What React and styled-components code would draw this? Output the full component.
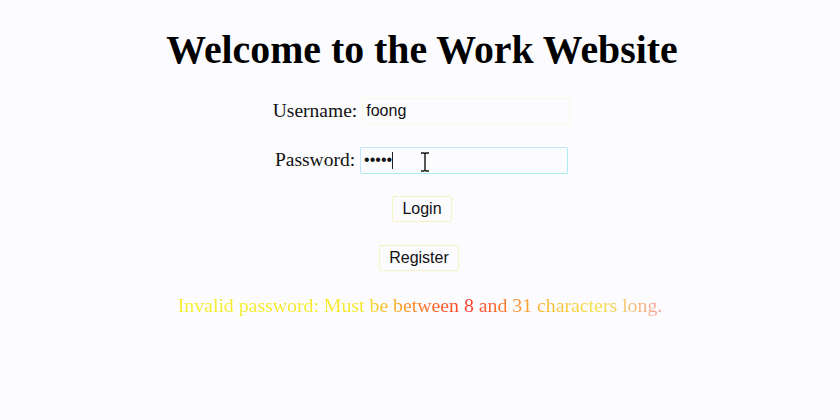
import React from "react";
import styled, { createGlobalStyle } from "styled-components";

const GlobalStyle = createGlobalStyle`
  html, body {
    margin: 0;
    padding: 0;
    background: #fcfcff;
  }
  body {
    font-family: "Liberation Serif", "Times New Roman", serif;
  }
`;

function App() {
  return (
    <>
      <GlobalStyle />
      <Page>
        <Title>Welcome to the Work Website</Title>
        <Form>
          <Row $shift={3}>
            <Label>Username:</Label>
            <Input type="text" defaultValue="foong" />
          </Row>
          <Row $shift={3}>
            <Label>Password:</Label>
            <InputWrap>
              <Input type="password" defaultValue="fooon" focused />
              <Caret />
              <Cursor viewBox="0 0 10 20" width="10" height="20">
                <path
                  d="M1 1h2.5c.8 0 1.3.4 1.5 1 .2-.6.7-1 1.5-1H9M5 2v16M1 19h2.5c.8 0 1.3-.4 1.5-1 .2.6.7 1 1.5 1H9"
                  fill="none"
                  stroke="#111"
                  strokeWidth="1.4"
                />
              </Cursor>
            </InputWrap>
          </Row>
          <Row $shift={4}>
            <Button>Login</Button>
          </Row>
          <Row $shift={-2}>
            <Button>Register</Button>
          </Row>
        </Form>
        <ErrorText>Invalid password: Must be between 8 and 31 characters long.</ErrorText>
      </Page>
    </>
  );
}

export default App;

const Page = styled.div`
  width: 840px;
  height: 420px;
  padding-top: 28px;
  box-sizing: border-box;
  display: flex;
  flex-flow: column nowrap;
  align-items: center;
`;

const Title = styled.h1`
  margin: 0 0 25px 0;
  height: 44px;
  line-height: 44px;
  font-size: 39.8px;
  font-weight: 700;
  color: #000;
  transform: translateX(2px);
`;

const Form = styled.div`
  display: flex;
  flex-flow: column nowrap;
  align-items: center;
  gap: 21px;
`;

const Row = styled.div`
  height: 28px;
  display: flex;
  flex-flow: row nowrap;
  align-items: center;
  justify-content: center;
  gap: 5px;
  margin-left: ${(p) => (p.$shift > 0 ? p.$shift : 0)}px;
  margin-right: ${(p) => (p.$shift < 0 ? -p.$shift : 0)}px;
`;

const Label = styled.span`
  font-size: 19.5px;
  color: #111;
`;

const InputWrap = styled.div`
  position: relative;
  display: flex;
`;

const Input = styled.input`
  width: 208px;
  height: 27px;
  box-sizing: border-box;
  padding: 1px 3px;
  font-family: "Liberation Sans", Arial, sans-serif;
  font-size: 16px;
  color: #111;
  background: #fcfcff;
  outline: none;
  border-radius: 2px;
  border: 1px ${(p) => (p.focused ? "solid #a8ecf4" : "dotted #f8f6c8")};
  ${(p) => (p.focused ? "border-top-color: #bfe6f8; border-left-color: #bfe6f8;" : "")}
`;

const Caret = styled.span`
  position: absolute;
  left: 32px;
  top: 5px;
  width: 1px;
  height: 17px;
  background: #222;
`;

const Cursor = styled.svg`
  position: absolute;
  left: 60px;
  top: 5px;
`;

const Button = styled.button`
  font-family: "Liberation Sans", Arial, sans-serif;
  font-size: 16px;
  color: #111;
  height: 26px;
  padding: 0 9.5px;
  background: #fcfcff;
  border: 1px dotted #efe98a;
  border-radius: 2px;
`;

const ErrorText = styled.p`
  margin: 22px 0 0 0;
  font-size: 19.8px;
  line-height: 22px;
  background: linear-gradient(
    90deg,
    #f4ee2a 0%,
    #f5e828 38%,
    #ff6a24 52%,
    #ff3a2a 60%,
    #f8b030 74%,
    #f4e440 86%,
    #f6a0a0 100%
  );
  -webkit-background-clip: text;
  background-clip: text;
  color: transparent;
`;
